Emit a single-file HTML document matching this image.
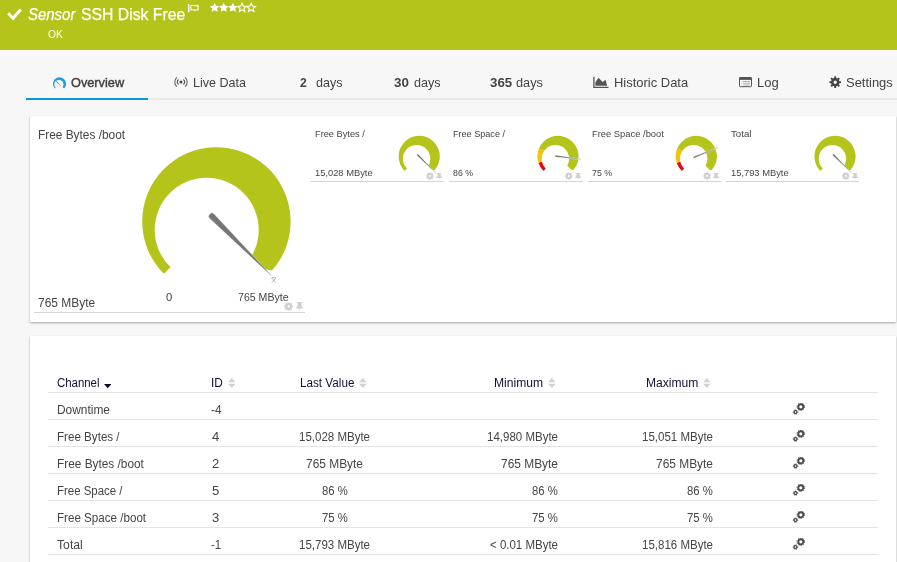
<!DOCTYPE html>
<html><head><meta charset="utf-8">
<style>
*{box-sizing:border-box;margin:0;padding:0}
html,body{width:897px;height:562px;overflow:hidden;background:#f7f7f7;font-family:"Liberation Sans",sans-serif;color:#444}
.abs{position:absolute}
#hdr{position:absolute;left:0;top:0;width:897px;height:50px;background:#b5c41b}
#tabline{position:absolute;left:26px;top:98px;width:871px;height:2px;background:#e9e9e9}
#tabsel{position:absolute;left:26px;top:98px;width:122px;height:2px;background:#0c97d6}
.card{position:absolute;background:#fff;box-shadow:0 1px 2px rgba(0,0,0,.32)}
.t{position:absolute;white-space:nowrap;transform-origin:0 0}
.hl{position:absolute;height:1px;background:#d4d4d4}
.row{position:absolute;left:48px;width:830px;height:1px;background:#e4e4e4}
</style></head><body>
<div id="hdr"></div>
<div id="tabline"></div><div id="tabsel"></div>
<div class="card" style="left:30px;top:116px;width:866px;height:206px"></div>
<div class="card" style="left:30px;top:336px;width:866px;height:240px"></div>
<svg class="abs" style="left:0;top:0" width="30" height="30" viewBox="0 0 30 30"><path d="M8.2 13.3 L13.1 18.3 L20.7 9.5" fill="none" stroke="#fff" stroke-width="2.9"/></svg>
<svg class="abs" style="left:188px;top:4px" width="11" height="9" viewBox="0 0 11 9"><path d="M0.7 0 V8.2" stroke="#fff" stroke-width="1.3" fill="none"/><path d="M2.8 1.6 C4.6 0.6 6.2 2.4 10 1.4 V5.8 C6.4 7 5 5 2.8 6Z" fill="none" stroke="#fff" stroke-width="1.1"/></svg>
<svg class="abs" style="left:208px;top:1px" width="52" height="14" viewBox="208 1 52 14"><polygon points="214.60,2.70 216.08,5.71 219.40,6.19 217.00,8.53 217.57,11.84 214.60,10.28 211.63,11.84 212.20,8.53 209.80,6.19 213.12,5.71" fill="#fff"/><polygon points="223.75,2.70 225.23,5.71 228.55,6.19 226.15,8.53 226.72,11.84 223.75,10.28 220.78,11.84 221.35,8.53 218.95,6.19 222.27,5.71" fill="#fff"/><polygon points="232.90,2.70 234.38,5.71 237.70,6.19 235.30,8.53 235.87,11.84 232.90,10.28 229.93,11.84 230.50,8.53 228.10,6.19 231.42,5.71" fill="#fff"/><polygon points="242.05,3.15 243.27,6.08 246.42,6.33 244.02,8.39 244.75,11.47 242.05,9.82 239.35,11.47 240.08,8.39 237.68,6.33 240.83,6.08" fill="none" stroke="#fff" stroke-width="1.1"/><polygon points="251.20,3.15 252.42,6.08 255.57,6.33 253.17,8.39 253.90,11.47 251.20,9.82 248.50,11.47 249.23,8.39 246.83,6.33 249.98,6.08" fill="none" stroke="#fff" stroke-width="1.1"/></svg>
<svg class="abs" style="left:0;top:0" width="80" height="100" viewBox="0 0 80 100"><mask id="c59"><rect x="50.9" y="75.30000000000001" width="17.2" height="17.2" fill="#fff"/><circle cx="58.90" cy="84.60" r="4.60" fill="#000"/></mask>
<g mask="url(#c59)">
<path d="M59.50 83.90 L54.83 88.57 A6.60 6.60 0 1 1 64.44 88.27 L63.74 88.14 Z" fill="#2a9bdc"/>
</g><path d="M56 81.2 L60.6 85.4" stroke="#2a9bdc" stroke-width="0.9" fill="none"/></svg>
<svg class="abs" style="left:174.300px;top:76px" width="14" height="12" viewBox="0 0 14 12"><circle cx="7" cy="6" r="1.5" fill="#4a4a4a"/><path d="M4.53 3.53 A3.5 3.5 0 0 0 4.53 8.47 M9.47 3.53 A3.5 3.5 0 0 1 9.47 8.47" fill="none" stroke="#555" stroke-width="1.15"/><path d="M2.85 1.39 A6.2 6.2 0 0 0 2.85 10.61 M11.15 1.39 A6.2 6.2 0 0 1 11.15 10.61" fill="none" stroke="#666" stroke-width="1.1"/></svg>
<svg class="abs" style="left:590px;top:74px" width="22" height="16" viewBox="590 74 22 16"><path d="M593.9 76.800 V87.400 H608.500" fill="none" stroke="#555" stroke-width="1.3"/><path d="M595.4 85.700 V82.200 L598.500 77.700 L602.700 82.100 L605.500 79.800 L607.200 85.700Z" fill="#555"/></svg>
<svg class="abs" style="left:737px;top:75px" width="18" height="14" viewBox="737 75 18 14"><rect x="739.500" y="77.500" width="12" height="9.200" rx="0.800" fill="#fff" stroke="#555" stroke-width="1"/><rect x="739.500" y="77.200" width="12" height="2.700" fill="#555"/><path d="M742.800 81.400 H750.300 M742.800 83.200 H750.300 M742.800 85 H750.300" stroke="#aaa" stroke-width="1"/><path d="M740.800 81.400 H742 M740.800 83.200 H742 M740.800 85 H742" stroke="#ccc" stroke-width="1"/></svg>
<svg class="abs" style="left:828px;top:75px" width="15" height="15" viewBox="828 75 15 15"><path fill-rule="evenodd" d="M839.33 81.21 L841.03 81.28 L841.03 83.12 L839.33 83.19 L838.82 84.42 L839.97 85.67 L838.67 86.97 L837.42 85.82 L836.19 86.33 L836.12 88.03 L834.28 88.03 L834.21 86.33 L832.98 85.82 L831.73 86.97 L830.43 85.67 L831.58 84.42 L831.07 83.19 L829.37 83.12 L829.37 81.28 L831.07 81.21 L831.58 79.98 L830.43 78.73 L831.73 77.43 L832.98 78.58 L834.21 78.07 L834.28 76.37 L836.12 76.37 L836.19 78.07 L837.42 78.58 L838.67 77.43 L839.97 78.73 L838.82 79.98Z M833.49 82.20 A1.71 1.71 0 1 0 836.91 82.20 A1.71 1.71 0 1 0 833.49 82.20Z" fill="#444"/><circle cx="835.20" cy="82.20" r="4.16" fill="none" stroke="#444" stroke-width="0.00"/></svg>
<svg class="abs" style="left:0;top:0" width="897" height="562" viewBox="0 0 897 562">
<mask id="c216"><rect x="140.2" y="145.2" width="152.4" height="152.4" fill="#fff"/><circle cx="206.70" cy="229.80" r="52.00" fill="#000"/></mask>
<g mask="url(#c216)">
<path d="M216.40 221.40 L163.93 273.87 A74.20 74.20 0 1 1 271.97 270.57 L264.04 269.04 Z" fill="#b5c41b"/>
</g>
<path d="M209.68 218.51 L271.02 275.68 L271.38 275.32 L214.21 213.98 A3.20 3.20 0 0 0 209.68 218.51Z" fill="#767676" stroke="#fff" stroke-width="0.6" stroke-opacity="0.7"/>
<path d="M271.5 277.7 H276 M271.8 278.2 L275.8 282.5 M275.8 278.2 L271.8 282.500" stroke="#8a9ab0" stroke-width="0.7" fill="none"/>
<mask id="c419"><rect x="396.59999999999997" y="133.8" width="45.2" height="45.2" fill="#fff"/><circle cx="416.60" cy="158.80" r="13.70" fill="#000"/></mask>
<g mask="url(#c419)">
<path d="M419.20 156.40 L404.63 170.97 A20.60 20.60 0 1 1 434.63 170.05 L432.43 169.63 Z" fill="#b5c41b"/>
</g>
<path d="M417.01 155.48 L435.53 173.02 L435.82 172.73 L418.28 154.21 A0.90 0.90 0 0 0 417.01 155.48Z" fill="#666" stroke="#fff" stroke-width="0.6" stroke-opacity="0.7"/>
<mask id="c558"><rect x="535.4" y="133.8" width="45.2" height="45.2" fill="#fff"/><circle cx="555.40" cy="158.80" r="13.70" fill="#000"/></mask>
<g mask="url(#c558)">
<path d="M558.00 156.40 L543.43 170.97 A20.60 20.60 0 0 1 538.41 162.77 Z" fill="#e30a13"/>
<path d="M558.00 156.40 L538.41 162.77 A20.60 20.60 0 0 1 538.97 148.52 Z" fill="#f4c40c"/>
<path d="M558.00 156.40 L538.97 148.52 A20.60 20.60 0 1 1 573.43 170.05 L571.23 169.63 Z" fill="#b5c41b"/>
</g>
<path d="M555.70 157.02 L581.09 159.52 L581.14 159.12 L555.93 155.23 A0.90 0.90 0 0 0 555.70 157.02Z" fill="#666" stroke="#fff" stroke-width="0.6" stroke-opacity="0.7"/>
<mask id="c696"><rect x="673.6999999999999" y="133.8" width="45.2" height="45.2" fill="#fff"/><circle cx="693.70" cy="158.80" r="13.70" fill="#000"/></mask>
<g mask="url(#c696)">
<path d="M696.30 156.40 L681.73 170.97 A20.60 20.60 0 0 1 676.71 162.77 Z" fill="#e30a13"/>
<path d="M696.30 156.40 L676.71 162.77 A20.60 20.60 0 0 1 677.27 148.52 Z" fill="#f4c40c"/>
<path d="M696.30 156.40 L677.27 148.52 A20.60 20.60 0 1 1 711.73 170.05 L709.53 169.63 Z" fill="#b5c41b"/>
</g>
<path d="M694.61 158.07 L717.90 147.67 L717.75 147.30 L693.92 156.41 A0.90 0.90 0 0 0 694.61 158.07Z" fill="#666" stroke="#fff" stroke-width="0.6" stroke-opacity="0.7"/>
<mask id="c835"><rect x="812.4" y="133.8" width="45.2" height="45.2" fill="#fff"/><circle cx="832.40" cy="158.80" r="13.70" fill="#000"/></mask>
<g mask="url(#c835)">
<path d="M835.00 156.40 L820.43 170.97 A20.60 20.60 0 1 1 850.43 170.05 L848.23 169.63 Z" fill="#b5c41b"/>
</g>
<path d="M832.81 155.48 L851.33 173.02 L851.62 172.73 L834.08 154.21 A0.90 0.90 0 0 0 832.81 155.48Z" fill="#666" stroke="#fff" stroke-width="0.6" stroke-opacity="0.7"/>
</svg>
<div class="hl" style="left:34px;top:312px;width:271px"></div>
<div class="hl" style="left:310px;top:181px;width:134px"></div>
<div class="hl" style="left:449px;top:181px;width:134px"></div>
<div class="hl" style="left:588px;top:181px;width:133px"></div>
<div class="hl" style="left:726px;top:181px;width:133px"></div>
<div class="row" style="top:392px"></div>
<div class="row" style="top:419px"></div>
<div class="row" style="top:446px"></div>
<div class="row" style="top:473px"></div>
<div class="row" style="top:500px"></div>
<div class="row" style="top:527px"></div>
<div class="row" style="top:554px"></div>
<svg class="abs" style="left:283px;top:301px" width="12" height="12" viewBox="283 301 12 12"><path fill-rule="evenodd" d="M292.00 305.57 L292.91 305.61 L292.91 307.39 L292.00 307.43 L291.66 308.24 L292.28 308.92 L291.02 310.18 L290.34 309.56 L289.53 309.90 L289.49 310.81 L287.71 310.81 L287.67 309.90 L286.86 309.56 L286.18 310.18 L284.92 308.92 L285.54 308.24 L285.20 307.43 L284.29 307.39 L284.29 305.61 L285.20 305.57 L285.54 304.76 L284.92 304.08 L286.18 302.82 L286.86 303.44 L287.67 303.10 L287.71 302.19 L289.49 302.19 L289.53 303.10 L290.34 303.44 L291.02 302.82 L292.28 304.08 L291.66 304.76Z M287.46 306.50 A1.14 1.14 0 1 0 289.74 306.50 A1.14 1.14 0 1 0 287.46 306.50Z" fill="#d0d0d0"/><circle cx="288.60" cy="306.50" r="3.45" fill="none" stroke="#d0d0d0" stroke-width="0.00"/></svg>
<svg class="abs" style="left:296.2px;top:302.2px" width="7.1" height="9.2" viewBox="0 0 8 8" preserveAspectRatio="none"><path d="M1 0 H7 V1.1 H6 L6.3 3.6 C7.3 4 7.9 4.700 7.900 5.600 H4.550 L4 8 L3.450 5.600 H0.100 C0.100 4.700 0.700 4 1.700 3.600 L2 1.100 H1Z" fill="#d0d0d0"/></svg>
<svg class="abs" style="left:425px;top:171px" width="11" height="11" viewBox="425 171 11 11"><path fill-rule="evenodd" d="M432.92 175.24 L433.72 175.27 L433.72 176.83 L432.92 176.86 L432.63 177.58 L433.17 178.16 L432.06 179.27 L431.48 178.73 L430.76 179.02 L430.73 179.82 L429.17 179.82 L429.14 179.02 L428.42 178.73 L427.84 179.27 L426.73 178.16 L427.27 177.58 L426.98 176.86 L426.18 176.83 L426.18 175.27 L426.98 175.24 L427.27 174.52 L426.73 173.94 L427.84 172.83 L428.42 173.37 L429.14 173.08 L429.17 172.28 L430.73 172.28 L430.76 173.08 L431.48 173.37 L432.06 172.83 L433.17 173.94 L432.63 174.52Z M428.95 176.05 A1.00 1.00 0 1 0 430.95 176.05 A1.00 1.00 0 1 0 428.95 176.05Z" fill="#d0d0d0"/><circle cx="429.95" cy="176.05" r="3.02" fill="none" stroke="#d0d0d0" stroke-width="0.00"/></svg>
<svg class="abs" style="left:436.3px;top:172.9px" width="6.2" height="7.1" viewBox="0 0 8 8" preserveAspectRatio="none"><path d="M1 0 H7 V1.1 H6 L6.3 3.6 C7.3 4 7.9 4.700 7.900 5.600 H4.550 L4 8 L3.450 5.600 H0.100 C0.100 4.700 0.700 4 1.700 3.600 L2 1.100 H1Z" fill="#d0d0d0"/></svg>
<svg class="abs" style="left:563px;top:171px" width="11" height="11" viewBox="563 171 11 11"><path fill-rule="evenodd" d="M571.72 175.24 L572.52 175.27 L572.52 176.83 L571.72 176.86 L571.43 177.58 L571.97 178.16 L570.86 179.27 L570.28 178.73 L569.56 179.02 L569.53 179.82 L567.97 179.82 L567.94 179.02 L567.22 178.73 L566.64 179.27 L565.53 178.16 L566.07 177.58 L565.78 176.86 L564.98 176.83 L564.98 175.27 L565.78 175.24 L566.07 174.52 L565.53 173.94 L566.64 172.83 L567.22 173.37 L567.94 173.08 L567.97 172.28 L569.53 172.28 L569.56 173.08 L570.28 173.37 L570.86 172.83 L571.97 173.94 L571.43 174.52Z M567.75 176.05 A1.00 1.00 0 1 0 569.75 176.05 A1.00 1.00 0 1 0 567.75 176.05Z" fill="#d0d0d0"/><circle cx="568.75" cy="176.05" r="3.02" fill="none" stroke="#d0d0d0" stroke-width="0.00"/></svg>
<svg class="abs" style="left:575.1px;top:172.9px" width="6.2" height="7.1" viewBox="0 0 8 8" preserveAspectRatio="none"><path d="M1 0 H7 V1.1 H6 L6.3 3.6 C7.3 4 7.9 4.700 7.900 5.600 H4.550 L4 8 L3.450 5.600 H0.100 C0.100 4.700 0.700 4 1.700 3.600 L2 1.100 H1Z" fill="#d0d0d0"/></svg>
<svg class="abs" style="left:702px;top:171px" width="11" height="11" viewBox="702 171 11 11"><path fill-rule="evenodd" d="M710.02 175.24 L710.82 175.27 L710.82 176.83 L710.02 176.86 L709.73 177.58 L710.27 178.16 L709.16 179.27 L708.58 178.73 L707.86 179.02 L707.83 179.82 L706.27 179.82 L706.24 179.02 L705.52 178.73 L704.94 179.27 L703.83 178.16 L704.37 177.58 L704.08 176.86 L703.28 176.83 L703.28 175.27 L704.08 175.24 L704.37 174.52 L703.83 173.94 L704.94 172.83 L705.52 173.37 L706.24 173.08 L706.27 172.28 L707.83 172.28 L707.86 173.08 L708.58 173.37 L709.16 172.83 L710.27 173.94 L709.73 174.52Z M706.05 176.05 A1.00 1.00 0 1 0 708.05 176.05 A1.00 1.00 0 1 0 706.05 176.05Z" fill="#d0d0d0"/><circle cx="707.05" cy="176.05" r="3.02" fill="none" stroke="#d0d0d0" stroke-width="0.00"/></svg>
<svg class="abs" style="left:713.4px;top:172.9px" width="6.2" height="7.1" viewBox="0 0 8 8" preserveAspectRatio="none"><path d="M1 0 H7 V1.1 H6 L6.3 3.6 C7.3 4 7.9 4.700 7.900 5.600 H4.550 L4 8 L3.450 5.600 H0.100 C0.100 4.700 0.700 4 1.700 3.600 L2 1.100 H1Z" fill="#d0d0d0"/></svg>
<svg class="abs" style="left:840px;top:171px" width="11" height="11" viewBox="840 171 11 11"><path fill-rule="evenodd" d="M848.72 175.24 L849.52 175.27 L849.52 176.83 L848.72 176.86 L848.43 177.58 L848.97 178.16 L847.86 179.27 L847.28 178.73 L846.56 179.02 L846.53 179.82 L844.97 179.82 L844.94 179.02 L844.22 178.73 L843.64 179.27 L842.53 178.16 L843.07 177.58 L842.78 176.86 L841.98 176.83 L841.98 175.27 L842.78 175.24 L843.07 174.52 L842.53 173.94 L843.64 172.83 L844.22 173.37 L844.94 173.08 L844.97 172.28 L846.53 172.28 L846.56 173.08 L847.28 173.37 L847.86 172.83 L848.97 173.94 L848.43 174.52Z M844.75 176.05 A1.00 1.00 0 1 0 846.75 176.05 A1.00 1.00 0 1 0 844.75 176.05Z" fill="#d0d0d0"/><circle cx="845.75" cy="176.05" r="3.02" fill="none" stroke="#d0d0d0" stroke-width="0.00"/></svg>
<svg class="abs" style="left:852.1px;top:172.9px" width="6.2" height="7.1" viewBox="0 0 8 8" preserveAspectRatio="none"><path d="M1 0 H7 V1.1 H6 L6.3 3.6 C7.3 4 7.9 4.700 7.900 5.600 H4.550 L4 8 L3.450 5.600 H0.100 C0.100 4.700 0.700 4 1.700 3.600 L2 1.100 H1Z" fill="#d0d0d0"/></svg>
<svg class="abs" style="left:227.6px;top:377.8px" width="7.6" height="10" viewBox="0 0 7 10" preserveAspectRatio="none"><path d="M0 4.300 L3.5 0 L7 4.300Z M0 5.700 L3.5 10 L7 5.700Z" fill="#d2d2d2"/></svg>
<svg class="abs" style="left:359.0px;top:377.8px" width="7.6" height="10" viewBox="0 0 7 10" preserveAspectRatio="none"><path d="M0 4.300 L3.5 0 L7 4.300Z M0 5.700 L3.5 10 L7 5.700Z" fill="#d2d2d2"/></svg>
<svg class="abs" style="left:548.0px;top:377.8px" width="7.6" height="10" viewBox="0 0 7 10" preserveAspectRatio="none"><path d="M0 4.300 L3.5 0 L7 4.300Z M0 5.700 L3.5 10 L7 5.700Z" fill="#d2d2d2"/></svg>
<svg class="abs" style="left:702.9px;top:377.8px" width="7.6" height="10" viewBox="0 0 7 10" preserveAspectRatio="none"><path d="M0 4.300 L3.5 0 L7 4.300Z M0 5.700 L3.5 10 L7 5.700Z" fill="#d2d2d2"/></svg>
<svg class="abs" style="left:104px;top:383.6px" width="7.4" height="4.3" viewBox="0 0 8 4" preserveAspectRatio="none"><path d="M0 0 H8 L4 4Z" fill="#130830"/></svg>
<svg class="abs" style="left:792px;top:402.8px" width="14" height="12" viewBox="0 0 14 12"><circle cx="8.8" cy="3.8" r="2.55" fill="none" stroke="#4a4a4a" stroke-width="1.9"/><circle cx="8.8" cy="3.8" r="3.8" fill="none" stroke="#4a4a4a" stroke-width="0.9" stroke-dasharray="1.2 1.2"/><circle cx="3.5" cy="9.1" r="1.45" fill="none" stroke="#4a4a4a" stroke-width="1.3"/><circle cx="3.5" cy="9.1" r="2.3" fill="none" stroke="#4a4a4a" stroke-width="0.8" stroke-dasharray="0.9 0.9"/></svg>
<svg class="abs" style="left:792px;top:429.8px" width="14" height="12" viewBox="0 0 14 12"><circle cx="8.8" cy="3.8" r="2.55" fill="none" stroke="#4a4a4a" stroke-width="1.9"/><circle cx="8.8" cy="3.8" r="3.8" fill="none" stroke="#4a4a4a" stroke-width="0.9" stroke-dasharray="1.2 1.2"/><circle cx="3.5" cy="9.1" r="1.45" fill="none" stroke="#4a4a4a" stroke-width="1.3"/><circle cx="3.5" cy="9.1" r="2.3" fill="none" stroke="#4a4a4a" stroke-width="0.8" stroke-dasharray="0.9 0.9"/></svg>
<svg class="abs" style="left:792px;top:456.8px" width="14" height="12" viewBox="0 0 14 12"><circle cx="8.8" cy="3.8" r="2.55" fill="none" stroke="#4a4a4a" stroke-width="1.9"/><circle cx="8.8" cy="3.8" r="3.8" fill="none" stroke="#4a4a4a" stroke-width="0.9" stroke-dasharray="1.2 1.2"/><circle cx="3.5" cy="9.1" r="1.45" fill="none" stroke="#4a4a4a" stroke-width="1.3"/><circle cx="3.5" cy="9.1" r="2.3" fill="none" stroke="#4a4a4a" stroke-width="0.8" stroke-dasharray="0.9 0.9"/></svg>
<svg class="abs" style="left:792px;top:483.8px" width="14" height="12" viewBox="0 0 14 12"><circle cx="8.8" cy="3.8" r="2.55" fill="none" stroke="#4a4a4a" stroke-width="1.9"/><circle cx="8.8" cy="3.8" r="3.8" fill="none" stroke="#4a4a4a" stroke-width="0.9" stroke-dasharray="1.2 1.2"/><circle cx="3.5" cy="9.1" r="1.45" fill="none" stroke="#4a4a4a" stroke-width="1.3"/><circle cx="3.5" cy="9.1" r="2.3" fill="none" stroke="#4a4a4a" stroke-width="0.8" stroke-dasharray="0.9 0.9"/></svg>
<svg class="abs" style="left:792px;top:510.8px" width="14" height="12" viewBox="0 0 14 12"><circle cx="8.8" cy="3.8" r="2.55" fill="none" stroke="#4a4a4a" stroke-width="1.9"/><circle cx="8.8" cy="3.8" r="3.8" fill="none" stroke="#4a4a4a" stroke-width="0.9" stroke-dasharray="1.2 1.2"/><circle cx="3.5" cy="9.1" r="1.45" fill="none" stroke="#4a4a4a" stroke-width="1.3"/><circle cx="3.5" cy="9.1" r="2.3" fill="none" stroke="#4a4a4a" stroke-width="0.8" stroke-dasharray="0.9 0.9"/></svg>
<svg class="abs" style="left:792px;top:537.8px" width="14" height="12" viewBox="0 0 14 12"><circle cx="8.8" cy="3.8" r="2.55" fill="none" stroke="#4a4a4a" stroke-width="1.9"/><circle cx="8.8" cy="3.8" r="3.8" fill="none" stroke="#4a4a4a" stroke-width="0.9" stroke-dasharray="1.2 1.2"/><circle cx="3.5" cy="9.1" r="1.45" fill="none" stroke="#4a4a4a" stroke-width="1.3"/><circle cx="3.5" cy="9.1" r="2.3" fill="none" stroke="#4a4a4a" stroke-width="0.8" stroke-dasharray="0.9 0.9"/></svg>
<div class="t" style="left:27.6px;top:3.9px;font-size:17px;line-height:22px;color:#fff;transform:scaleX(0.8798);-webkit-text-stroke:0.25px #fff"><i>Sensor</i></div>
<div class="t" style="left:81.2px;top:3.9px;font-size:17px;line-height:22px;color:#fff;transform:scaleX(0.9269);-webkit-text-stroke:0.25px #fff">SSH Disk Free</div>
<div class="t" style="left:47.6px;top:27.3px;font-size:10.5px;line-height:14px;color:#fff;transform:scaleX(0.9755);">OK</div>
<div class="t" style="left:70.6px;top:74.4px;font-size:13px;line-height:17px;color:#444;transform:scaleX(0.9799);-webkit-text-stroke:0.45px #444">Overview</div>
<div class="t" style="left:192.6px;top:74.4px;font-size:13px;line-height:17px;color:#444;transform:scaleX(0.9668);">Live Data</div>
<div class="t" style="left:300.2px;top:74.4px;font-size:13px;line-height:17px;color:#444;transform:scaleX(0.9400);"><b>2</b></div>
<div class="t" style="left:316.4px;top:74.4px;font-size:13px;line-height:17px;color:#444;transform:scaleX(0.9647);">days</div>
<div class="t" style="left:393.6px;top:74.4px;font-size:13px;line-height:17px;color:#444;transform:scaleX(1.0298);"><b>30</b></div>
<div class="t" style="left:414.0px;top:74.4px;font-size:13px;line-height:17px;color:#444;transform:scaleX(0.9684);">days</div>
<div class="t" style="left:489.6px;top:74.4px;font-size:13px;line-height:17px;color:#444;transform:scaleX(1.0229);"><b>365</b></div>
<div class="t" style="left:515.7px;top:74.4px;font-size:13px;line-height:17px;color:#444;transform:scaleX(0.9793);">days</div>
<div class="t" style="left:613.6px;top:74.4px;font-size:13px;line-height:17px;color:#444;transform:scaleX(0.9970);">Historic Data</div>
<div class="t" style="left:757.3px;top:74.4px;font-size:13px;line-height:17px;color:#444;transform:scaleX(0.9999);">Log</div>
<div class="t" style="left:846.0px;top:74.4px;font-size:13px;line-height:17px;color:#444;transform:scaleX(0.9961);">Settings</div>
<div class="t" style="left:38.3px;top:126.8px;font-size:12px;line-height:16px;color:#444;transform:scaleX(0.9892);">Free Bytes /boot</div>
<div class="t" style="left:38.3px;top:295.1px;font-size:12px;line-height:16px;color:#444;transform:scaleX(0.9952);">765 MByte</div>
<div class="t" style="left:165.6px;top:289.5px;font-size:10.5px;line-height:14px;color:#444;transform:scaleX(1.0781);">0</div>
<div class="t" style="left:238.2px;top:289.5px;font-size:10.5px;line-height:14px;color:#444;transform:scaleX(1.0079);">765 MByte</div>
<div class="t" style="left:315.0px;top:128.0px;font-size:9.5px;line-height:12px;color:#444;transform:scaleX(0.9723);">Free Bytes /</div>
<div class="t" style="left:315.0px;top:167.0px;font-size:9.5px;line-height:12px;color:#444;transform:scaleX(0.9825);">15,028 MByte</div>
<div class="t" style="left:453.3px;top:128.0px;font-size:9.5px;line-height:12px;color:#444;transform:scaleX(0.9560);">Free Space /</div>
<div class="t" style="left:453.3px;top:167.0px;font-size:9.5px;line-height:12px;color:#444;transform:scaleX(0.9235);">86 %</div>
<div class="t" style="left:591.8px;top:128.0px;font-size:9.5px;line-height:12px;color:#444;transform:scaleX(0.9864);">Free Space /boot</div>
<div class="t" style="left:591.8px;top:167.0px;font-size:9.5px;line-height:12px;color:#444;transform:scaleX(0.9235);">75 %</div>
<div class="t" style="left:730.8px;top:128.0px;font-size:9.5px;line-height:12px;color:#444;transform:scaleX(1.0210);">Total</div>
<div class="t" style="left:730.8px;top:167.0px;font-size:9.5px;line-height:12px;color:#444;transform:scaleX(0.9825);">15,793 MByte</div>
<div class="t" style="left:56.8px;top:375.4px;font-size:12px;line-height:16px;color:#170c38;transform:scaleX(0.9507);">Channel</div>
<div class="t" style="left:211.4px;top:375.4px;font-size:12px;line-height:16px;color:#170c38;transform:scaleX(0.9833);">ID</div>
<div class="t" style="left:300.0px;top:375.4px;font-size:12px;line-height:16px;color:#170c38;transform:scaleX(0.9744);">Last Value</div>
<div class="t" style="left:494.3px;top:375.4px;font-size:12px;line-height:16px;color:#170c38;transform:scaleX(1.0088);">Minimum</div>
<div class="t" style="left:646.4px;top:375.4px;font-size:12px;line-height:16px;color:#170c38;transform:scaleX(1.0055);">Maximum</div>
<div class="t" style="left:56.8px;top:402.0px;font-size:12px;line-height:16px;color:#444;transform:scaleX(0.9933);">Downtime</div>
<div class="t" style="left:211.3px;top:402.0px;font-size:12px;line-height:16px;color:#444;transform:scaleX(0.9933);">-4</div>
<div class="t" style="left:56.8px;top:429.0px;font-size:12px;line-height:16px;color:#444;transform:scaleX(0.9677);">Free Bytes /</div>
<div class="t" style="left:212.0px;top:429.0px;font-size:12px;line-height:16px;color:#444;transform:scaleX(1.0916);">4</div>
<div class="t" style="left:299.1px;top:429.0px;font-size:12px;line-height:16px;color:#444;transform:scaleX(0.9589);">15,028 MByte</div>
<div class="t" style="left:486.9px;top:429.0px;font-size:12px;line-height:16px;color:#444;transform:scaleX(0.9589);">14,980 MByte</div>
<div class="t" style="left:642.0px;top:429.0px;font-size:12px;line-height:16px;color:#444;transform:scaleX(0.9589);">15,051 MByte</div>
<div class="t" style="left:56.8px;top:456.0px;font-size:12px;line-height:16px;color:#444;transform:scaleX(0.9870);">Free Bytes /boot</div>
<div class="t" style="left:212.0px;top:456.0px;font-size:12px;line-height:16px;color:#444;transform:scaleX(1.0916);">2</div>
<div class="t" style="left:306.1px;top:456.0px;font-size:12px;line-height:16px;color:#444;transform:scaleX(0.9935);">765 MByte</div>
<div class="t" style="left:500.9px;top:456.0px;font-size:12px;line-height:16px;color:#444;transform:scaleX(0.9935);">765 MByte</div>
<div class="t" style="left:656.0px;top:456.0px;font-size:12px;line-height:16px;color:#444;transform:scaleX(0.9935);">765 MByte</div>
<div class="t" style="left:56.8px;top:483.0px;font-size:12px;line-height:16px;color:#444;transform:scaleX(0.9519);">Free Space /</div>
<div class="t" style="left:212.0px;top:483.0px;font-size:12px;line-height:16px;color:#444;transform:scaleX(1.0916);">5</div>
<div class="t" style="left:321.7px;top:483.0px;font-size:12px;line-height:16px;color:#444;transform:scaleX(0.9430);">86 %</div>
<div class="t" style="left:532.1px;top:483.0px;font-size:12px;line-height:16px;color:#444;transform:scaleX(0.9430);">86 %</div>
<div class="t" style="left:687.2px;top:483.0px;font-size:12px;line-height:16px;color:#444;transform:scaleX(0.9430);">86 %</div>
<div class="t" style="left:56.8px;top:510.0px;font-size:12px;line-height:16px;color:#444;transform:scaleX(0.9678);">Free Space /boot</div>
<div class="t" style="left:212.0px;top:510.0px;font-size:12px;line-height:16px;color:#444;transform:scaleX(1.0916);">3</div>
<div class="t" style="left:321.7px;top:510.0px;font-size:12px;line-height:16px;color:#444;transform:scaleX(0.9430);">75 %</div>
<div class="t" style="left:532.1px;top:510.0px;font-size:12px;line-height:16px;color:#444;transform:scaleX(0.9430);">75 %</div>
<div class="t" style="left:687.2px;top:510.0px;font-size:12px;line-height:16px;color:#444;transform:scaleX(0.9430);">75 %</div>
<div class="t" style="left:56.8px;top:537.0px;font-size:12px;line-height:16px;color:#444;transform:scaleX(1.0174);">Total</div>
<div class="t" style="left:211.3px;top:537.0px;font-size:12px;line-height:16px;color:#444;transform:scaleX(0.9464);">-1</div>
<div class="t" style="left:299.1px;top:537.0px;font-size:12px;line-height:16px;color:#444;transform:scaleX(0.9589);">15,793 MByte</div>
<div class="t" style="left:489.9px;top:537.0px;font-size:12px;line-height:16px;color:#444;transform:scaleX(0.9571);">&lt; 0.01 MByte</div>
<div class="t" style="left:642.0px;top:537.0px;font-size:12px;line-height:16px;color:#444;transform:scaleX(0.9589);">15,816 MByte</div>
</body></html>
